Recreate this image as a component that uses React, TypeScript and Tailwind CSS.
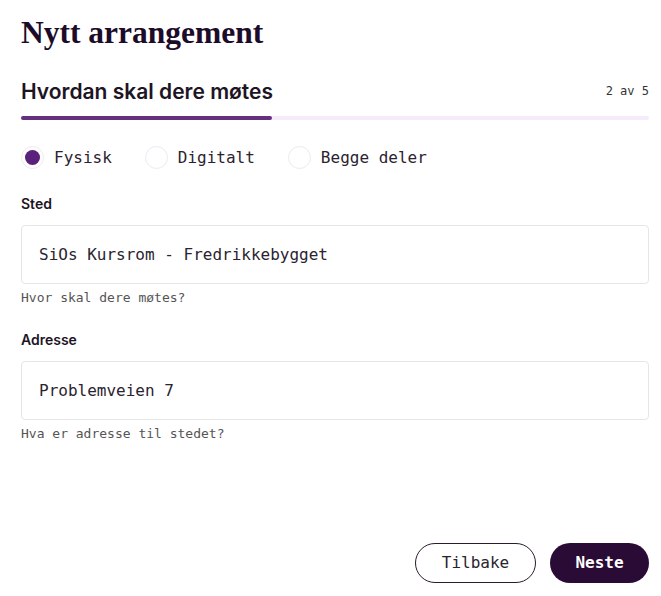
import { useState } from "react";

const mono = "font-['DejaVu_Sans_Mono',monospace]";

function Radio({ label, checked, onClick }: { label: string; checked: boolean; onClick: () => void }) {
    return (
        <button type="button" onClick={onClick} className="flex items-center gap-[10px]">
            <span className="w-[23px] h-[23px] rounded-full border border-[#efe9f1] bg-white flex items-center justify-center">
                {checked && <span className="w-[15px] h-[15px] rounded-full bg-[#5b1f7c]" />}
            </span>
            <span className={`${mono} text-[16px] text-[#2b2330]`}>{label}</span>
        </button>
    );
}

function Field({ label, value, hint }: { label: string; value: string; hint: string }) {
    return (
        <div className="flex flex-col">
            <label className="font-['Inter',sans-serif] text-[14px] font-semibold text-[#1d1424] leading-none">{label}</label>
            <input
                defaultValue={value}
                className={`${mono} mt-[14px] h-[59px] w-full rounded-[4px] border border-[#e6e6e6] px-[17px] text-[16px] text-[#2b2330] outline-none`}
            />
            <span className={`${mono} mt-[7px] text-[13px] text-[#555] leading-none`}>{hint}</span>
        </div>
    );
}

export default function App() {
    const [mode, setMode] = useState("Fysisk");
    return (
        <div className="w-[661px] h-[596px] bg-white pl-[21px] pr-[12px] pt-[17px] flex flex-col">
            <h1 className="font-['Liberation_Serif',serif] font-bold text-[31.5px] leading-none text-[#1c0c2a]">
                Nytt arrangement
            </h1>
            <div className="flex items-center justify-between mt-[32px]">
                <h2 className="font-['Inter',sans-serif] text-[21px] font-semibold text-[#1d1424] leading-none">
                    Hvordan skal dere møtes
                </h2>
                <span className={`${mono} text-[12px] text-[#333]`}>2 av 5</span>
            </div>
            <div className="mt-[14px] h-[4px] rounded-full bg-[#f4ecfb] flex">
                <div className="w-2/5 h-full rounded-full bg-[#66307f]" />
            </div>
            <div className="flex items-center mt-[26px] gap-[33px]">
                <Radio label="Fysisk" checked={mode === "Fysisk"} onClick={() => setMode("Fysisk")} />
                <Radio label="Digitalt" checked={mode === "Digitalt"} onClick={() => setMode("Digitalt")} />
                <Radio label="Begge deler" checked={mode === "Begge deler"} onClick={() => setMode("Begge deler")} />
            </div>
            <div className="mt-[27px] flex flex-col gap-[29px]">
                <Field label="Sted" value="SiOs Kursrom - Fredrikkebygget" hint="Hvor skal dere møtes?" />
                <Field label="Adresse" value="Problemveien 7" hint="Hva er adresse til stedet?" />
            </div>
            <div className="mt-auto mb-[13px] flex justify-end gap-[14px]">
                <button className={`${mono} h-[40px] w-[121px] rounded-full border border-[#2a1a30] text-[16px] text-[#2b2330]`}>
                    Tilbake
                </button>
                <button className={`${mono} h-[40px] w-[99px] rounded-full bg-[#2a0b35] text-[16px] font-bold text-white`}>
                    Neste
                </button>
            </div>
        </div>
    );
}
